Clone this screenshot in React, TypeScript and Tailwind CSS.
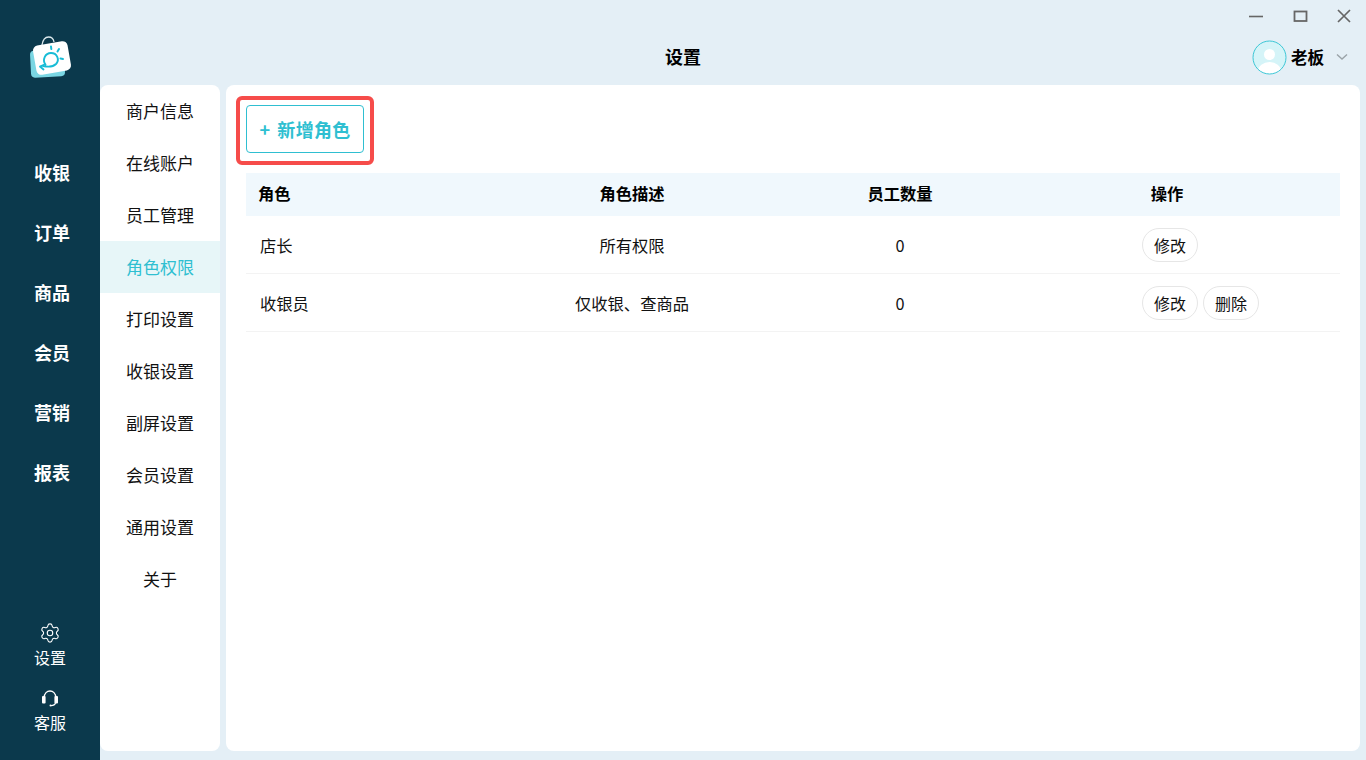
import { Settings } from 'lucide-react';

const navItems = ['收银', '订单', '商品', '会员', '营销', '报表'];
const subItems = ['商户信息', '在线账户', '员工管理', '角色权限', '打印设置', '收银设置', '副屏设置', '会员设置', '通用设置', '关于'];
const roles = [
  { name: '店长', desc: '所有权限', count: 0, canDelete: false },
  { name: '收银员', desc: '仅收银、查商品', count: 0, canDelete: true },
];

const rowGrid = 'grid grid-cols-[250px_272px_264px_270px_1fr] items-center';

function Logo() {
  return (
    <svg width="44" height="44" viewBox="0 0 44 44" className="ml-[1px]">
      <path d="M13 9 C14 3 17 1 19.5 1 C22 1 24.5 2.5 25 6" fill="none" stroke="#dbe8ec" strokeWidth="1.3" />
      <rect x="1.5" y="14" width="34" height="27" rx="4" fill="#7ad6e3" transform="rotate(-3 18 27)" />
      <rect x="5.5" y="7.2" width="35" height="29.6" rx="5" fill="#ffffff" transform="rotate(-10 23 22)" />
      <g fill="none" stroke="#18bcd6" strokeLinecap="round">
        <path d="M16.5 28.5 C13 24 16 17 22 17 C28 17 31 23.5 27 28 C24.5 30.5 19 31 14 30" strokeWidth="1.9" />
        <path d="M11 30.5 L15.5 28.5 M11 30.5 L14.5 33.5" strokeWidth="1.9" />
        <path d="M22 10.5 L22.3 13 M30 13 L28.5 15.5 M34 23 L31.5 22.5" strokeWidth="2" />
      </g>
    </svg>
  );
}

function Headset() {
  return (
    <svg width="18" height="18" viewBox="0 0 18 18" fill="none">
      <path d="M3.2 7.5 C3.2 -1.2 14.8 -1.2 14.8 7.5" stroke="white" strokeWidth="1.3" />
      <rect x="1" y="6" width="3.6" height="7.5" rx="1" fill="white" />
      <rect x="13.4" y="6" width="3.6" height="7.5" rx="1" fill="white" />
      <path d="M14.5 13 C14 14.8 12.5 15.6 10 15.6" stroke="white" strokeWidth="1.2" />
      <circle cx="9.5" cy="15.6" r="1" fill="white" />
    </svg>
  );
}

function Avatar() {
  return (
    <svg width="35" height="35" viewBox="0 0 35 35">
      <defs>
        <clipPath id="avatar-clip">
          <circle cx="17.5" cy="17.5" r="16.5" />
        </clipPath>
      </defs>
      <circle cx="17.5" cy="17.5" r="16.5" fill="#d5f4f8" />
      <g clipPath="url(#avatar-clip)">
        <circle cx="17.5" cy="14.5" r="5.5" fill="#ffffff" />
        <ellipse cx="17.5" cy="31" rx="11.5" ry="9" fill="#ffffff" />
      </g>
      <circle cx="17.5" cy="17.5" r="16.5" fill="none" stroke="#3cc7d6" strokeWidth="1" />
    </svg>
  );
}

function PillButton({ label }: { label: string }) {
  return (
    <button className="h-[34px] w-[56px] rounded-[17px] border border-[#e6e6e6] bg-white text-[16px] text-[#111]">
      {label}
    </button>
  );
}

export default function App() {
  return (
    <div
      className="flex h-[760px] w-[1366px] overflow-hidden bg-[#e4eff6] text-black"
      style={{ fontFamily: '"Noto Sans CJK SC", "Liberation Sans", sans-serif' }}
    >
      {/* Left nav */}
      <aside className="flex w-[100px] flex-col items-center bg-[#0b394c] text-white">
        <div className="mt-[36px] flex h-[44px] items-center justify-center">
          <Logo />
        </div>
        <nav className="mt-[62px] flex flex-col items-center pl-[4px]">
          {navItems.map((item) => (
            <div key={item} className="flex h-[60px] items-center text-[18px] font-bold">
              {item}
            </div>
          ))}
        </nav>
        <div className="mt-auto flex flex-col items-center pb-[26px] text-[16px]">
          <Settings size={22} strokeWidth={1.2} />
          <span className="mt-[1px] h-[24px] leading-[24px]">设置</span>
          <div className="mt-[21px]">
            <Headset />
          </div>
          <span className="mt-[2px] h-[24px] leading-[24px]">客服</span>
        </div>
      </aside>

      <div className="flex min-w-0 flex-1 flex-col">
        {/* Title bar */}
        <header className="h-[85px] shrink-0">
          <div className="flex h-[32px] items-start justify-end pr-[14px] pt-[9px]">
            <svg width="16" height="14" viewBox="0 0 16 14" className="mr-[28px]">
              <path d="M1 7.5 H15" stroke="#666" strokeWidth="1.6" />
            </svg>
            <svg width="16" height="14" viewBox="0 0 16 14" className="mr-[28px]">
              <rect x="2.5" y="2.5" width="12" height="9.5" fill="none" stroke="#666" strokeWidth="1.8" />
            </svg>
            <svg width="16" height="14" viewBox="0 0 16 14">
              <path d="M2 1 L14 13 M14 1 L2 13" stroke="#666" strokeWidth="1.7" />
            </svg>
          </div>
          <div className="flex h-[50px] items-center pl-[565px] pr-[18px]">
            <h1 className="mb-[2px] text-[18px] font-bold">设置</h1>
            <div className="ml-auto flex items-center">
              <Avatar />
              <span className="ml-[4px] text-[16.5px] font-bold">老板</span>
              <svg width="12" height="8" viewBox="0 0 12 8" className="ml-[12px]">
                <path d="M1 1.5 L6 6 L11 1.5" fill="none" stroke="#9aa3a8" strokeWidth="1.4" />
              </svg>
            </div>
          </div>
        </header>

        <div className="flex min-h-0 flex-1 gap-[6px] pb-[9px] pr-[6px]">
          {/* Settings menu */}
          <div className="w-[120px] shrink-0 rounded-[8px] bg-white">
            {subItems.map((item) => (
              <div
                key={item}
                className={
                  item === '角色权限'
                    ? 'flex h-[52px] items-center justify-center bg-[#e7f6f8] text-[17px] text-[#2fbfd1]'
                    : 'flex h-[52px] items-center justify-center text-[17px] text-[#111]'
                }
              >
                {item}
              </div>
            ))}
          </div>

          {/* Content */}
          <main className="relative min-w-0 flex-1 rounded-[8px] bg-white px-[20px] pt-[20px]">
            <button className="flex h-[48px] w-[118px] items-center justify-center gap-[7px] rounded-[4px] border border-[#2fbfd1] bg-white text-[18px] font-bold tracking-[0.3px] text-[#2fbfd1]">
              <span>+</span>
              <span>新增角色</span>
            </button>
            <div className="pointer-events-none absolute left-[10px] top-[11px] h-[69px] w-[138px] rounded-[6px] border-[4px] border-[#f64c4a]" />

            <div className={`${rowGrid} mt-[20px] h-[43px] bg-[#f0f8fd] pb-[2px] text-[16.3px] font-bold`}>
              <div className="pl-[12px]">角色</div>
              <div className="text-center">角色描述</div>
              <div className="text-center">员工数量</div>
              <div className="text-center">操作</div>
            </div>

            {roles.map((role) => (
              <div key={role.name} className={`${rowGrid} h-[58px] border-b border-[#f3f3f3] text-[16.3px] text-[#111]`}>
                <div className="pl-[14px] pt-[1px]">{role.name}</div>
                <div className="pt-[1px] text-center">{role.desc}</div>
                <div className="pt-[1px] text-center">{role.count}</div>
                <div className="col-span-2 flex gap-[5px] pl-[110px]">
                  <PillButton label="修改" />
                  {role.canDelete && <PillButton label="删除" />}
                </div>
              </div>
            ))}
          </main>
        </div>
      </div>
    </div>
  );
}
